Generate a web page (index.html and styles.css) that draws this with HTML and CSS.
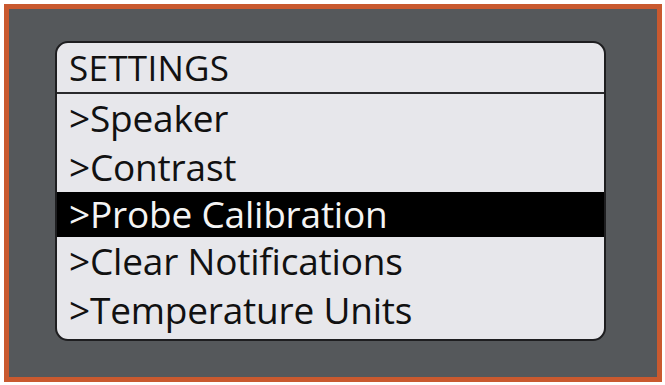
FILE: index.html
```html
<!DOCTYPE html>
<html>
<head>
<meta charset="utf-8">
<link rel="stylesheet" href="styles.css">
</head>
<body>
<div class="frame">
  <div class="panel">
    <div class="header">SETTINGS</div>
    <div class="item">&gt;Speaker</div>
    <div class="item">&gt;Contrast</div>
    <div class="item selected">&gt;Probe Calibration</div>
    <div class="item">&gt;Clear Notifications</div>
    <div class="item last">&gt;Temperature Units</div>
  </div>
</div>
</body>
</html>
```
FILE: styles.css
```css
html, body {
  margin: 0;
  padding: 0;
  background: #ffffff;
}
body {
  padding: 4px 3px 0 4px;
  width: 665px;
  height: 385px;
  box-sizing: border-box;
}
.frame {
  width: 658px;
  height: 378px;
  box-sizing: border-box;
  border: 5px solid #c9592f;
  background: #55585b;
  padding: 32px 0 0 46px;
}
.panel {
  width: 551px;
  height: 300px;
  box-sizing: border-box;
  border: 2px solid #1e1e20;
  border-radius: 13px;
  background: #e7e7eb;
  overflow: hidden;
  display: flex;
  flex-direction: column;
  font-family: "Open Sans", sans-serif;
  color: #111;
}
.header {
  height: 51px;
  box-sizing: border-box;
  border-bottom: 2px solid #2a2a2c;
  font-size: 35px;
  line-height: 50px;
  padding-left: 12px;
  letter-spacing: 0.3px;
}
.item {
  height: 49px;
  font-size: 37px;
  line-height: 47px;
  padding-left: 12px;
  letter-spacing: -0.2px;
}
.item.selected {
  height: 45px;
  line-height: 43px;
  background: #000;
  color: #f4f4f4;
}
```
